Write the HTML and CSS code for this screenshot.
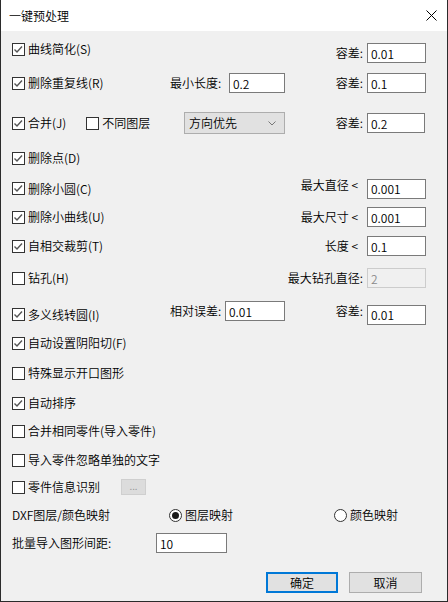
FILE: index.html
```html
<!DOCTYPE html>
<html lang="zh-CN">
<head>
<meta charset="utf-8">
<title>一键预处理</title>
<link rel="stylesheet" href="styles.css">
</head>
<body>
<div class="window">
  <header class="titlebar">
    <span class="title">一键预处理</span>
    <svg class="close" width="11" height="11" viewBox="0 0 11 11"><path d="M0.5 0.5L10.5 10.5M10.5 0.5L0.5 10.5" stroke="#000" stroke-width="1"/></svg>
  </header>
  <main class="content">
    <div class="row">
      <label class="check c1 raise8"><span class="box"><svg viewBox="0 0 13 13"><path d="M2.5 6.5L5 9L10 3.5" fill="none" stroke="#555" stroke-width="1.4"/></svg></span>曲线简化(S)</label>
      <span class="lbl c3">容差:</span>
      <input class="field c4" type="text" value="0.01">
    </div>
    <div class="row">
      <label class="check c1"><span class="box"><svg viewBox="0 0 13 13"><path d="M2.5 6.5L5 9L10 3.5" fill="none" stroke="#555" stroke-width="1.4"/></svg></span>删除重复线(R)</label>
      <div class="mid c2"><span>最小长度:</span><input class="field w56" type="text" value="0.2"></div>
      <span class="lbl c3">容差:</span>
      <input class="field c4" type="text" value="0.1">
    </div>
    <div class="row">
      <div class="pair c1">
        <label class="check"><span class="box"><svg viewBox="0 0 13 13"><path d="M2.5 6.5L5 9L10 3.5" fill="none" stroke="#555" stroke-width="1.4"/></svg></span>合并(J)</label>
        <label class="check"><span class="box"></span>不同图层</label>
      </div>
      <div class="select c2"><span>方向优先</span><svg width="8" height="5" viewBox="0 0 8 5"><path d="M0.5 0.5L4 4L7.5 0.5" fill="none" stroke="#777" stroke-width="1"/></svg></div>
      <span class="lbl c3">容差:</span>
      <input class="field c4 w58" type="text" value="0.2">
    </div>
    <div class="row">
      <label class="check c1"><span class="box"><svg viewBox="0 0 13 13"><path d="M2.5 6.5L5 9L10 3.5" fill="none" stroke="#555" stroke-width="1.4"/></svg></span>删除点(D)</label>
    </div>
    <div class="row">
      <label class="check c1"><span class="box"><svg viewBox="0 0 13 13"><path d="M2.5 6.5L5 9L10 3.5" fill="none" stroke="#555" stroke-width="1.4"/></svg></span>删除小圆(C)</label>
      <span class="lbl lt c3 raise7">最大直径 &lt;</span>
      <input class="field c4 raise7" type="text" value="0.001">
    </div>
    <div class="row">
      <label class="check c1"><span class="box"><svg viewBox="0 0 13 13"><path d="M2.5 6.5L5 9L10 3.5" fill="none" stroke="#555" stroke-width="1.4"/></svg></span>删除小曲线(U)</label>
      <span class="lbl lt c3">最大尺寸 &lt;</span>
      <input class="field c4" type="text" value="0.001">
    </div>
    <div class="row">
      <label class="check c1"><span class="box"><svg viewBox="0 0 13 13"><path d="M2.5 6.5L5 9L10 3.5" fill="none" stroke="#555" stroke-width="1.4"/></svg></span>自相交裁剪(T)</label>
      <span class="lbl lt c3">长度 &lt;</span>
      <input class="field c4" type="text" value="0.1">
    </div>
    <div class="row">
      <label class="check c1"><span class="box"></span>钻孔(H)</label>
      <span class="lbl c23">最大钻孔直径:</span>
      <input class="field c4" type="text" value="2" disabled>
    </div>
    <div class="row">
      <label class="check c1"><span class="box"><svg viewBox="0 0 13 13"><path d="M2.5 6.5L5 9L10 3.5" fill="none" stroke="#555" stroke-width="1.4"/></svg></span>多义线转圆(I)</label>
      <div class="mid c2 raise7"><span>相对误差:</span><input class="field w60" type="text" value="0.01"></div>
      <span class="lbl c3 raise7">容差:</span>
      <input class="field c4 raise7" type="text" value="0.01">
    </div>
    <div class="row">
      <label class="check c1 wide"><span class="box"><svg viewBox="0 0 13 13"><path d="M2.5 6.5L5 9L10 3.5" fill="none" stroke="#555" stroke-width="1.4"/></svg></span>自动设置阴阳切(F)</label>
    </div>
    <div class="row">
      <label class="check c1 wide"><span class="box"></span>特殊显示开口图形</label>
    </div>
    <div class="row">
      <label class="check c1 wide"><span class="box"><svg viewBox="0 0 13 13"><path d="M2.5 6.5L5 9L10 3.5" fill="none" stroke="#555" stroke-width="1.4"/></svg></span>自动排序</label>
    </div>
    <div class="row">
      <label class="check c1 wide"><span class="box"></span>合并相同零件(导入零件)</label>
    </div>
    <div class="row">
      <label class="check c1 wide"><span class="box"></span>导入零件忽略单独的文字</label>
    </div>
    <div class="row">
      <div class="pair2 c1">
        <label class="check"><span class="box"></span>零件信息识别</label>
        <button class="dots" type="button" disabled>...</button>
      </div>
    </div>
    <div class="row">
      <span class="c1">DXF图层/颜色映射</span>
      <label class="radio c2 first"><span class="dot on"></span>图层映射</label>
      <label class="radio c34"><span class="dot"></span>颜色映射</label>
    </div>
    <div class="row">
      <div class="spacing c14"><span class="sp-lbl">批量导入图形间距:</span><input class="field w71" type="text" value="10"></div>
    </div>
    <div class="actions">
      <button class="btn default" type="button">确定</button>
      <button class="btn" type="button">取消</button>
    </div>
  </main>
</div>
</body>
</html>
```

FILE: styles.css
```css
* { box-sizing: border-box; }
html, body { margin: 0; padding: 0; }
body {
  background: #f0f0f0;
  font-family: "Noto Sans CJK SC", "Noto Sans", sans-serif;
  font-size: 12px;
  font-weight: 350;
  color: #000;
}
.window {
  width: 448px;
  height: 602px;
  border: 1px solid #2b2b2b;
  border-top: none;
  background: #f0f0f0;
  display: flex;
  flex-direction: column;
}
.titlebar {
  height: 31px;
  flex: none;
  background: #fff;
  display: flex;
  align-items: center;
  justify-content: space-between;
  padding: 0 10px 0 8px;
}
.title { line-height: 16px; }
.close { display: block; }

.content {
  flex: 1;
  display: grid;
  grid-template-rows: 32px 39px 36px 29px 30px 29px 32px 33px 32px 30px 30px 28px 29px 27px 28px 28px 39px auto;
  padding: 10px 21px 0 11px;
}
.row {
  height: 20px;
  display: grid;
  grid-template-columns: 158px 115px 1fr 59px;
  align-items: center;
  line-height: 16px;
  white-space: nowrap;
}
.c1 { grid-column: 1; }
.c2 { grid-column: 2; }
.c3 { grid-column: 3; }
.c4 { grid-column: 4; }
.c23 { grid-column: 2 / 4; justify-self: end; padding-right: 5px; }
.c34 { grid-column: 3 / 5; padding-left: 49px; }
.c14 { grid-column: 1 / 5; }
.wide { grid-column: 1 / 4; }
.raise7 { margin-bottom: 7px; }
.raise8 { margin-bottom: 8px; }

.check {
  display: inline-flex;
  align-items: center;
  gap: 3px;
}
.box {
  width: 13px;
  height: 13px;
  border: 1px solid #333;
  background: #fff;
  display: inline-block;
  flex: none;
  position: relative;
}
.box svg {
  position: absolute;
  left: -1px;
  top: -1px;
  width: 13px;
  height: 13px;
}
.pair { display: flex; gap: 20px; }
.pair2 { display: flex; align-items: center; gap: 21px; }

.lbl {
  justify-self: end;
  padding-right: 4px;
}
.lbl.lt { padding-right: 9px; }

.field {
  height: 20px;
  width: 59px;
  border: 1px solid #7a7a7a;
  background: #fff;
  font: inherit;
  font-size: 12px;
  color: #000;
  padding: 0 3px;
  margin: 0;
  outline: none;
}
.field:disabled {
  border-color: #cccccc;
  background: #f0f0f0;
  color: #8a8a8a;
}
.w56 { width: 56px; }
.w58 { width: 58px; }
.w60 { width: 60px; }
.w71 { width: 71px; }

.mid {
  display: flex;
  align-items: center;
  justify-content: space-between;
}

.select {
  margin-left: 14px;
  width: 101px;
  height: 22px;
  border: 1px solid #adadad;
  background: #e1e1e1;
  display: flex;
  align-items: center;
  justify-content: space-between;
  padding: 0 8px 0 4px;
}
.select svg { display: block; }

.dots {
  width: 25px;
  height: 16px;
  border: 1px solid #cfcfcf;
  background: #dcdcdc;
  color: #9a9a9a;
  font: inherit;
  font-size: 10px;
  line-height: 10px;
  padding: 0 0 3px;
  margin: 0;
}

.radio {
  display: inline-flex;
  align-items: center;
  gap: 3px;
}
.radio.first { margin-left: -1px; }
.dot {
  width: 13px;
  height: 13px;
  border: 1px solid #333;
  border-radius: 50%;
  background: #fff;
  display: inline-flex;
  align-items: center;
  justify-content: center;
  flex: none;
}
.dot.on::after {
  content: "";
  width: 7px;
  height: 7px;
  border-radius: 50%;
  background: #1a1a1a;
}

.spacing {
  display: flex;
  align-items: center;
}
.sp-lbl { width: 144px; }

.actions {
  display: flex;
  justify-content: flex-end;
  gap: 11px;
  padding-right: 4px;
}
.btn {
  width: 73px;
  height: 21px;
  border: 1px solid #adadad;
  background: #e1e1e1;
  font: inherit;
  font-size: 12px;
  color: #000;
  padding: 0;
  margin: 0;
  line-height: 16px;
}
.btn.default {
  width: 72px;
  border: 2px solid #0078d7;
}
```
